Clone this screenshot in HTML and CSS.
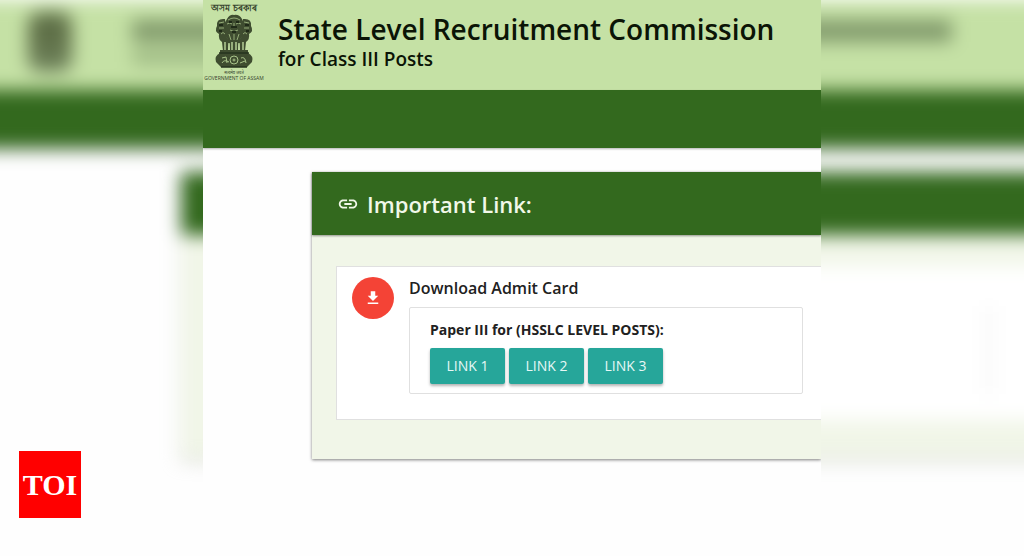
FILE: index.html
```html
<!DOCTYPE html>
<html lang="en">

<head>
  <meta charset="UTF-8" />
  <meta name="viewport" content="width=device-width, initial-scale=1" />
  <title>State Level Recruitment Commission</title>
  <link rel="stylesheet" href="styles.css">
</head>

<body>
  <!-- Blurred copy of the page, stretched behind the sharp one -->
  <div class="backdrop" aria-hidden="true">
    <div class="backdrop-header">
      <div class="smudge-emblem"></div>
      <div class="smudge-titles">
        <div class="smudge-title"></div>
        <div class="smudge-subtitle"></div>
      </div>
    </div>
    <div class="backdrop-nav"></div>
    <div class="backdrop-card">
      <div class="backdrop-card-header"></div>
      <div class="backdrop-panel">
        <div class="backdrop-box"></div>
      </div>
    </div>
  </div>

  <main class="page">
    <header class="site-header">
      <div class="emblem">
        <span class="emblem-top" lang="as">অসম চৰকাৰ</span>
        <svg class="emblem-art" viewBox="0 0 40 56" aria-hidden="true">
          <g fill="#3f4d30">
            <path d="M13 5 Q16 0 20 1 Q25 0 28 5 L31 12 Q31 20 27 24 L26 30 H14 L13 24 Q9 20 9 12Z" />
            <path d="M11 5 Q2 4 3 12 Q0 17 5 20 Q4 25 8 28 L9 37 H14 L15 27 Q10 20 12 13Z" />
            <path d="M29 5 Q38 4 37 12 Q40 17 35 20 Q36 25 32 28 L31 37 H26 L25 27 Q30 20 28 13Z" />
            <path d="M15 25 H25 L24 38 H16Z" />
            <path d="M6 36 H34 V39 Q40 42 38 48 L33 53 H7 L2 48 Q0 42 6 39Z" />
          </g>
          <g fill="none" stroke="#a9c48a" stroke-width="0.8">
            <path d="M14 6 Q20 2 26 6 M13 10 Q16 8 18 10 M22 10 Q24 8 27 10 M20 9 V14 M16 16 Q20 19 24 16" />
            <path d="M5 9 L10 8 M5 14 L10 14 M7 20 Q9 17 11 20 M35 9 L30 8 M35 14 L30 14 M33 20 Q31 17 29 20" />
            <path d="M15 20 L17 26 M20 20 V26 M25 20 L23 26" />
          </g>
          <path d="M11 28 V36 M15 29 V36 M18 28 V36 M22 28 V36 M25 29 V36 M29 28 V36" stroke="#c5e1a5"
            stroke-width="1.3" />
          <g fill="none" stroke="#a9c48a">
            <path d="M8 44 L12 43 L13 49 M8 49 Q10 45 15 48 M27 44 Q31 42 32 49 M26 49 L31 47" />
            <circle cx="20" cy="46" r="4" />
            <circle cx="20" cy="46" r="1" />
          </g>
          <path d="M15 8 H18 M22 8 H25 M17 13 H23 M18 18 H22 M5 11 H9 M31 11 H35 M5 17 H8 M32 17 H35" stroke="#1f2a18"
            stroke-width="2" />
          <path d="M5 39 H35 M7 53 H33" stroke="#26331e" stroke-width="1.5" />
        </svg>
        <span class="emblem-motto" lang="hi">सत्यमेव जयते</span>
        <span class="emblem-name">GOVERNMENT OF ASSAM</span>
      </div>
      <div class="titles">
        <h1>State Level Recruitment Commission</h1>
        <p>for Class III Posts</p>
      </div>
    </header>

    <nav class="site-nav"></nav>

    <section class="card">
      <h2 class="card-header">
        <svg viewBox="0 0 24 24" aria-hidden="true">
          <path
            d="M3.9 12c0-1.71 1.39-3.1 3.1-3.1h4V7H7c-2.76 0-5 2.24-5 5s2.24 5 5 5h4v-1.9H7c-1.71 0-3.1-1.39-3.1-3.1zM8 13h8v-2H8v2zm9-6h-4v1.9h4c1.71 0 3.1 1.39 3.1 3.1s-1.39 3.1-3.1 3.1h-4V17h4c2.76 0 5-2.24 5-5s-2.24-5-5-5z" />
        </svg>
        Important Link:
      </h2>
      <div class="card-body">
        <div class="item">
          <span class="item-icon">
            <svg viewBox="0 0 24 24" aria-hidden="true">
              <path d="M19 9h-4V3H9v6H5l7 7 7-7zM5 18v2h14v-2H5z" />
            </svg>
          </span>
          <div class="item-content">
            <h3>Download Admit Card</h3>
            <div class="paper">
              <h4>Paper III for (HSSLC LEVEL POSTS):</h4>
              <div class="links">
                <a class="btn" href="#link1">LINK 1</a>
                <a class="btn" href="#link2">LINK 2</a>
                <a class="btn" href="#link3">LINK 3</a>
              </div>
            </div>
          </div>
        </div>
      </div>
    </section>
  </main>

  <div class="toi-logo">TOI</div>
</body>

</html>
```

FILE: styles.css
```css
* {
  margin: 0;
  padding: 0;
  box-sizing: border-box;
}

body {
  position: relative;
  display: grid;
  grid-template-columns: 1fr minmax(0, 618px) 1fr;
  min-height: 100vh;
  overflow: hidden;
  background-color: #fefefe;
  font-family: "Open Sans", "Noto Sans", sans-serif;
  color: #212121;
}

/* Blurred backdrop */
.backdrop {
  position: absolute;
  inset: 0 -32px;
  filter: blur(9px);
}

.backdrop-header {
  display: flex;
  height: 90px;
  padding: 12px 0 0 60px;
  background-color: #c5e1a5;
}

.smudge-emblem {
  width: 44px;
  height: 60px;
  border-radius: 12px;
  background: linear-gradient(#5f7048 45%, #738760);
}

.smudge-titles {
  width: 820px;
  margin-left: 60px;
}

.smudge-title {
  height: 22px;
  margin-top: 8px;
  background-color: #829b6c;
}

.smudge-subtitle {
  width: 256px;
  height: 14px;
  margin-top: 8px;
  background-color: #9cb882;
}

.backdrop-nav {
  height: 58px;
  background-color: #33691e;
  box-shadow: 0 2px 4px rgba(0, 0, 0, 0.3);
}

.backdrop-card {
  display: flow-root;
  height: 287px;
  margin: 24px 0 0 213px;
  background-color: #f1f6e8;
  box-shadow: 0 2px 3px rgba(0, 0, 0, 0.3);
}

.backdrop-card-header {
  height: 63px;
  background-color: #33691e;
}

.backdrop-panel {
  height: 154px;
  margin: 31px 0 0 40px;
  padding: 40px 66px 26px 0;
  background-color: #fff;
}

.backdrop-box {
  height: 88px;
  border-right: 2px solid #e0e0e0;
}

/* Main page */
.page {
  position: relative;
  grid-column: 2;
  overflow: hidden;
  background-color: #fefefe;
}

.site-header {
  display: flex;
  gap: 13px;
  height: 90px;
  background-color: #c5e1a5;
}

.emblem {
  display: flex;
  flex-direction: column;
  align-items: center;
  width: 62px;
  padding-top: 2px;
  color: #33402a;
  white-space: nowrap;
}

.emblem-top {
  font-size: 9px;
  font-weight: 600;
  line-height: 12px;
}

.emblem-art {
  width: 40px;
  height: 56px;
}

.emblem-motto {
  font-size: 4px;
  line-height: 5px;
}

.emblem-name {
  font-size: 5px;
  line-height: 6px;
}

.titles {
  padding-top: 10px;
  color: #0b1406;
}

.titles h1 {
  font-size: 28px;
  font-weight: 600;
  line-height: 38px;
  white-space: nowrap;
}

.titles p {
  font-size: 19px;
  font-weight: 600;
  line-height: 22px;
}

.site-nav {
  height: 58px;
  background-color: #33691e;
  box-shadow: 0 1px 2px rgba(0, 0, 0, 0.3);
}

/* Card runs off the right edge */
.card {
  margin: 24px 0 0 109px;
  background-color: #f1f6e8;
  box-shadow: 0 1px 3px rgba(0, 0, 0, 0.5);
}

.card-header {
  display: flex;
  align-items: center;
  gap: 8px;
  height: 63px;
  padding-left: 25px;
  background-color: #33691e;
  box-shadow: 0 1px 2px rgba(0, 0, 0, 0.4);
  color: #f1f8e9;
  font-size: 22px;
  font-weight: 600;
}

.card-header svg {
  width: 22px;
  height: 22px;
  fill: #f1f8e9;
}

.card-body {
  padding: 31px 0 39px 24px;
}

.item {
  display: flex;
  gap: 15px;
  padding: 10px 18px 25px 15px;
  border: 1px solid #e0e0e0;
  border-right: none;
  background-color: #fff;
}

.item-icon {
  display: flex;
  align-items: center;
  justify-content: center;
  flex-shrink: 0;
  width: 42px;
  height: 42px;
  border-radius: 50%;
  background-color: #f44336;
}

.item-icon svg {
  width: 18px;
  height: 18px;
  fill: #fff;
}

.item-content {
  flex: 1;
}

.item-content h3 {
  font-size: 16px;
  font-weight: 600;
  line-height: 22px;
  margin-bottom: 8px;
}

.paper {
  padding: 12px 20px 9px;
  border: 1px solid #e0e0e0;
  border-radius: 2px;
}

.paper h4 {
  font-size: 14px;
  font-weight: 700;
  line-height: 20px;
  margin-bottom: 8px;
}

.links {
  display: flex;
  gap: 4px;
}

.btn {
  width: 75px;
  height: 36px;
  border-radius: 2px;
  background-color: #26a69a;
  box-shadow: 0 2px 3px rgba(0, 0, 0, 0.3);
  color: #e8f8f6;
  font-size: 14px;
  line-height: 36px;
  text-align: center;
  text-decoration: none;
}

/* Publisher logo */
.toi-logo {
  position: absolute;
  left: 19px;
  bottom: 38px;
  width: 62px;
  height: 67px;
  background-color: #f00;
  color: #fff;
  font-family: "Liberation Serif", serif;
  font-size: 30px;
  font-weight: bold;
  line-height: 67px;
  text-align: center;
}
```
